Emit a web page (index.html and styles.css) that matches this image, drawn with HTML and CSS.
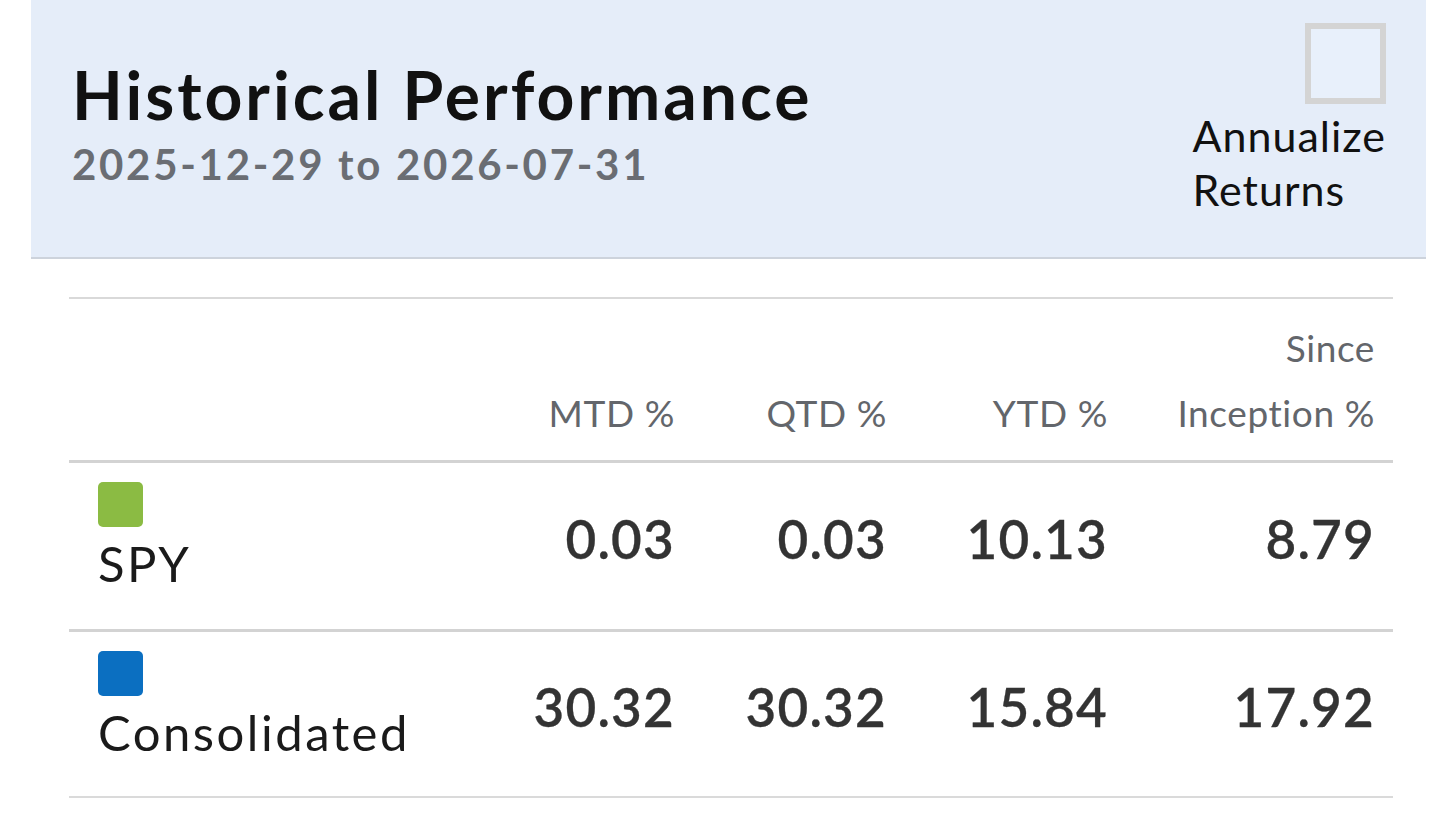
FILE: index.html
```html
<!DOCTYPE html>
<html lang="en">
<head>
<meta charset="utf-8">
<title>Historical Performance</title>
<link rel="stylesheet" href="styles.css">
</head>
<body>
<section class="card">
  <header class="panel">
    <div class="heading">
      <h1 class="title">Historical Performance</h1>
      <div class="range">2025-12-29 to 2026-07-31</div>
    </div>
    <label class="toggle">
      <span class="checkbox"></span>
      <span class="toggle-text">Annualize<br>Returns</span>
    </label>
  </header>
  <div class="table">
    <div class="row head">
      <div class="cell label"></div>
      <div class="cell num">MTD %</div>
      <div class="cell num">QTD %</div>
      <div class="cell num">YTD %</div>
      <div class="cell num">Since<br>Inception %</div>
    </div>
    <div class="row body">
      <div class="cell label"><span class="swatch green"></span><span class="name">SPY</span></div>
      <div class="cell num val">0.03</div>
      <div class="cell num val">0.03</div>
      <div class="cell num val">10.13</div>
      <div class="cell num val">8.79</div>
    </div>
    <div class="row body last">
      <div class="cell label"><span class="swatch blue"></span><span class="name">Consolidated</span></div>
      <div class="cell num val">30.32</div>
      <div class="cell num val">30.32</div>
      <div class="cell num val">15.84</div>
      <div class="cell num val">17.92</div>
    </div>
  </div>
</section>
</body>
</html>
```

FILE: styles.css
```css
html, body {
  margin: 0;
  padding: 0;
  background: #ffffff;
}
body {
  font-family: Lato, "Liberation Sans", sans-serif;
  color: #1a1a1a;
  width: 1456px;
  height: 819px;
  overflow: hidden;
}
.card {
  display: flex;
  flex-direction: column;
}
.panel {
  margin-left: 31px;
  width: 1395px;
  height: 259px;
  box-sizing: border-box;
  background: #e5edf9;
  border-bottom: 2px solid #cdd3dc;
  display: flex;
  justify-content: space-between;
  align-items: flex-start;
  padding: 0 40px 0 41px;
}
.heading {
  padding-top: 57px;
}
.title {
  margin: 0;
  font-size: 66px;
  font-weight: 700;
  line-height: 76px;
  color: #111111;
  letter-spacing: 3px;
}
.range {
  margin-top: 6px;
  font-size: 42px;
  font-weight: 700;
  line-height: 50px;
  color: #6a6d73;
  letter-spacing: 2.7px;
}
.toggle {
  display: flex;
  flex-direction: column;
  align-items: flex-end;
  padding-top: 23px;
}
.checkbox {
  width: 81px;
  height: 81px;
  box-sizing: border-box;
  border: 6px solid #d4d4d4;
  background: #e8f0fb;
}
.toggle-text {
  font-size: 43px;
  line-height: 54px;
  color: #111111;
  margin-top: 5px;
  margin-left: -4px;
  align-self: flex-start;
  letter-spacing: 1px;
}
.table {
  margin: 38px 0 0 69px;
  width: 1324px;
  border-top: 2px solid #d9d9d9;
}
.row {
  display: grid;
  grid-template-columns: 1fr 212px 212px 221px 267px;
}
.cell {
  padding-right: 18px;
}
.num {
  text-align: right;
}
.head {
  height: 164px;
  box-sizing: border-box;
  border-bottom: 3px solid #d3d3d3;
  align-items: end;
  padding-bottom: 15px;
  font-size: 37px;
  line-height: 65px;
  color: #63666b;
  letter-spacing: 0.6px;
}
.body {
  height: 169px;
  box-sizing: border-box;
  border-bottom: 3px solid #d3d3d3;
  align-items: center;
}
.body.last {
  height: 166px;
  border-bottom: 2px solid #dadada;
}
.label {
  padding-left: 29px;
  display: flex;
  flex-direction: column;
  align-items: flex-start;
  align-self: start;
  padding-top: 19px;
}
.swatch {
  width: 45px;
  height: 45px;
  border-radius: 5px;
}
.green { background: #8bbb43; }
.blue { background: #0b6fc1; }
.name {
  font-size: 49px;
  line-height: 60px;
  color: #1a1a1a;
  margin-top: 6px;
  letter-spacing: 2.5px;
}
.val {
  font-size: 53px;
  font-weight: 600;
  color: #333333;
  line-height: 60px;
  letter-spacing: 1.2px;
  padding-bottom: 14px;
  -webkit-text-stroke: 0.3px #333333;
}
```
